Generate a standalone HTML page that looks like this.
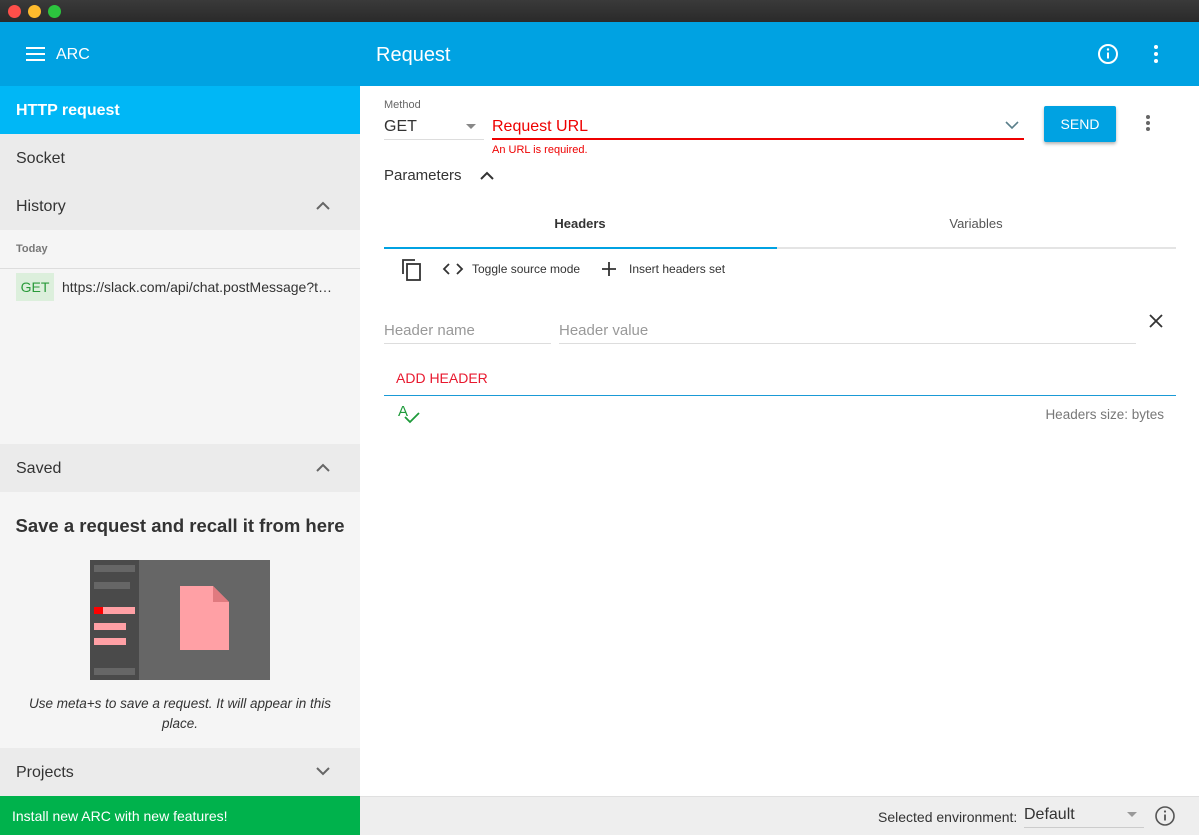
<!DOCTYPE html>
<html><head><meta charset="utf-8"><style>
*{box-sizing:border-box;margin:0;padding:0}
body{width:1199px;height:835px;overflow:hidden;font-family:"Liberation Sans",Roboto,sans-serif;background:#fff;position:relative;color:#333}
.abs{position:absolute}
.tb{left:0;top:0;width:1199px;height:22px;background:linear-gradient(#3a3a3a,#2a2a2a)}
.dot{top:5px;width:13px;height:13px;border-radius:50%}
.hdr{left:0;top:22px;width:1199px;height:64px;background:#00a2e2;color:#fff}
.side{left:0;top:86px;width:360px;height:710px;background:#f5f5f5}
.row{position:absolute;left:0;width:360px;height:48px;line-height:48px;padding-left:16px;font-size:16px;color:#333;background:#ebebeb}
.chev{position:absolute;right:30px;top:19px}
</style></head><body>
<div class="abs tb"></div>
<div class="abs dot" style="left:8px;background:#fe4f4a"></div>
<div class="abs dot" style="left:28px;background:#febb2d"></div>
<div class="abs dot" style="left:48px;background:#2cc53e"></div>
<div class="abs hdr">
 <svg class="abs" style="left:26px;top:24px" width="20" height="16"><path d="M0 2h19M0 8h19M0 14h19" stroke="#fff" stroke-width="2"/></svg>
 <div class="abs" style="left:56px;top:24px;font-size:16px">ARC</div>
 <div class="abs" style="left:376px;top:22px;font-size:20px">Request</div>
 <svg class="abs" style="left:1097px;top:21px" width="22" height="22"><circle cx="11" cy="11" r="9" fill="none" stroke="#fff" stroke-width="2"/><path d="M11 9.5v6" stroke="#fff" stroke-width="2"/><circle cx="11" cy="6.5" r="1.2" fill="#fff"/></svg>
 <svg class="abs" style="left:1152px;top:22px" width="8" height="20"><circle cx="4" cy="3" r="2" fill="#fff"/><circle cx="4" cy="10" r="2" fill="#fff"/><circle cx="4" cy="17" r="2" fill="#fff"/></svg>
</div>
<div class="abs side">
 <div class="row" style="top:0;background:#00b7f6;color:#fff;font-weight:bold;line-height:50px">HTTP request</div>
 <div class="row" style="top:48px;line-height:50px">Socket</div>
 <div class="row" style="top:96px;line-height:50px">History<svg class="chev" width="14" height="9"><path d="M1 8l6-6 6 6" fill="none" stroke="#666" stroke-width="2"/></svg></div>
 <div class="abs" style="left:16px;top:157px;font-size:11px;font-weight:bold;color:#777">Today</div>
 <div class="abs" style="left:0;top:182px;width:360px;height:1px;background:#ddd"></div>
 <div class="abs" style="left:16px;top:187px;width:38px;height:28px;background:#dcefdc;color:#2a9a3a;font-size:14px;line-height:28px;text-align:center">GET</div>
 <div class="abs" style="left:62px;top:193px;font-size:14px;color:#333">https://slack.com/api/chat.postMessage?t…</div>
 <div class="row" style="top:358px;line-height:50px">Saved<svg class="chev" width="14" height="9"><path d="M1 8l6-6 6 6" fill="none" stroke="#666" stroke-width="2"/></svg></div>
 <div class="abs" style="left:0;top:429px;width:360px;text-align:center;font-size:18.5px;font-weight:bold;color:#333">Save a request and recall it from here</div>
 <svg class="abs" style="left:90px;top:474px" width="180" height="120">
  <rect width="180" height="120" fill="#666"/><rect width="49" height="120" fill="#4a4a4a"/>
  <rect x="4" y="5" width="41" height="7" fill="#666"/><rect x="4" y="22" width="36" height="7" fill="#666"/>
  <rect x="4" y="47" width="41" height="7" fill="#ffa0a5"/><rect x="4" y="47" width="9" height="7" fill="#f00"/>
  <rect x="4" y="63" width="32" height="7" fill="#ffa0a5"/><rect x="4" y="78" width="32" height="7" fill="#ffa0a5"/>
  <rect x="4" y="108" width="41" height="7" fill="#666"/>
  <path d="M90 26h33l16 16v48h-49z" fill="#ffa0a5"/><path d="M123 26l16 16h-16z" fill="#e07a7f"/>
 </svg>
 <div class="abs" style="left:24px;top:608px;width:312px;text-align:center;font-size:13.5px;font-style:italic;line-height:20px;color:#333">Use meta+s to save a request. It will appear in this place.</div>
 <div class="row" style="top:662px;line-height:50px">Projects<svg class="chev" width="14" height="9"><path d="M1 1l6 6 6-6" fill="none" stroke="#666" stroke-width="2"/></svg></div>
</div>
<div class="abs" style="left:0;top:796px;width:360px;height:39px;background:#00b24c;color:#fff;font-size:14px;line-height:40px;padding-left:12px">Install new ARC with new features!</div>
<div class="abs" style="left:360px;top:796px;width:839px;height:39px;background:#eee;border-top:1px solid #e0e0e0"></div>
<div class="abs" style="left:878px;top:809px;font-size:14px;color:#333">Selected environment:</div>
<div class="abs" style="left:1024px;top:806px;font-size:16px;color:#333">Default</div>
<div class="abs" style="left:1024px;top:827px;width:120px;height:1px;background:#ccc"></div>
<svg class="abs" style="left:1127px;top:812px" width="12" height="6"><path d="M0 0h10l-5 5z" fill="#999"/></svg>
<svg class="abs" style="left:1154px;top:805px" width="22" height="22"><circle cx="11" cy="11" r="9" fill="none" stroke="#555" stroke-width="1.6"/><path d="M11 9.5v6" stroke="#555" stroke-width="1.8"/><circle cx="11" cy="6.5" r="1.1" fill="#555"/></svg>

<div class="abs" style="left:384px;top:99px;font-size:11px;color:#666">Method</div>
<div class="abs" style="left:384px;top:118px;font-size:16px;color:#333">GET</div>
<svg class="abs" style="left:466px;top:124px" width="12" height="6"><path d="M0 0h10l-5 5z" fill="#888"/></svg>
<div class="abs" style="left:384px;top:139px;width:100px;height:1px;background:#ddd"></div>
<div class="abs" style="left:492px;top:118px;font-size:16px;color:#e00">Request URL</div>
<div class="abs" style="left:492px;top:138px;width:532px;height:2px;background:#e00"></div>
<svg class="abs" style="left:1005px;top:121px" width="14" height="9"><path d="M1 1l6 6 6-6" fill="none" stroke="#5a7f8a" stroke-width="1.6"/></svg>
<div class="abs" style="left:492px;top:144px;font-size:11px;color:#e00">An URL is required.</div>
<div class="abs" style="left:1044px;top:106px;width:72px;height:36px;background:#00a2e2;border-radius:2px;color:#fff;font-size:14px;line-height:36px;text-align:center;box-shadow:0 2px 3px rgba(0,0,0,.3)">SEND</div>
<svg class="abs" style="left:1144px;top:114px" width="8" height="20"><circle cx="4" cy="3" r="2" fill="#666"/><circle cx="4" cy="9" r="2" fill="#666"/><circle cx="4" cy="15" r="2" fill="#666"/></svg>
<div class="abs" style="left:384px;top:167px;font-size:15px;color:#333">Parameters</div>
<svg class="abs" style="left:480px;top:171px" width="14" height="9"><path d="M1 8l6-6 6 6" fill="none" stroke="#333" stroke-width="2"/></svg>
<div class="abs" style="left:384px;top:216px;width:392px;text-align:center;font-size:13px;font-weight:bold;color:#333">Headers</div>
<div class="abs" style="left:776px;top:216px;width:400px;text-align:center;font-size:13px;color:#555">Variables</div>
<div class="abs" style="left:384px;top:247px;width:792px;height:2px;background:#e4e4e4"></div>
<div class="abs" style="left:384px;top:247px;width:393px;height:2px;background:#00a2e2"></div>
<svg class="abs" style="left:401px;top:258px" width="22" height="24"><path d="M2 16V2h12" fill="none" stroke="#333" stroke-width="1.8"/><rect x="6" y="6" width="13" height="16" fill="none" stroke="#333" stroke-width="1.8"/></svg>
<svg class="abs" style="left:442px;top:262px" width="22" height="14"><path d="M7 2L2 7l5 5M15 2l5 5-5 5" fill="none" stroke="#333" stroke-width="1.8"/></svg>
<div class="abs" style="left:472px;top:262px;font-size:12px;color:#333">Toggle source mode</div>
<svg class="abs" style="left:601px;top:261px" width="16" height="16"><path d="M8 1v14M1 8h14" stroke="#333" stroke-width="1.8"/></svg>
<div class="abs" style="left:629px;top:262px;font-size:12px;color:#333">Insert headers set</div>
<div class="abs" style="left:384px;top:322px;font-size:15px;color:#999">Header name</div>
<div class="abs" style="left:384px;top:343px;width:167px;height:1px;background:#ddd"></div>
<div class="abs" style="left:559px;top:322px;font-size:15px;color:#999">Header value</div>
<div class="abs" style="left:559px;top:343px;width:577px;height:1px;background:#ddd"></div>
<svg class="abs" style="left:1148px;top:313px" width="16" height="16"><path d="M2 2l12 12M14 2L2 14" stroke="#333" stroke-width="1.8"/></svg>
<div class="abs" style="left:396px;top:370px;font-size:14px;color:#e8182e">ADD HEADER</div>
<div class="abs" style="left:384px;top:395px;width:792px;height:1px;background:#1a9ad6"></div>
<div class="abs" style="left:398px;top:403px;font-size:15px;color:#1e9a3a">A</div>
<svg class="abs" style="left:404px;top:412px" width="16" height="12"><path d="M1 5l5 5 9-9" fill="none" stroke="#1e9a3a" stroke-width="1.8"/></svg>
<div class="abs" style="left:1043px;top:407px;width:121px;text-align:right;font-size:13.5px;color:#777">Headers size: bytes</div>
</body></html>
